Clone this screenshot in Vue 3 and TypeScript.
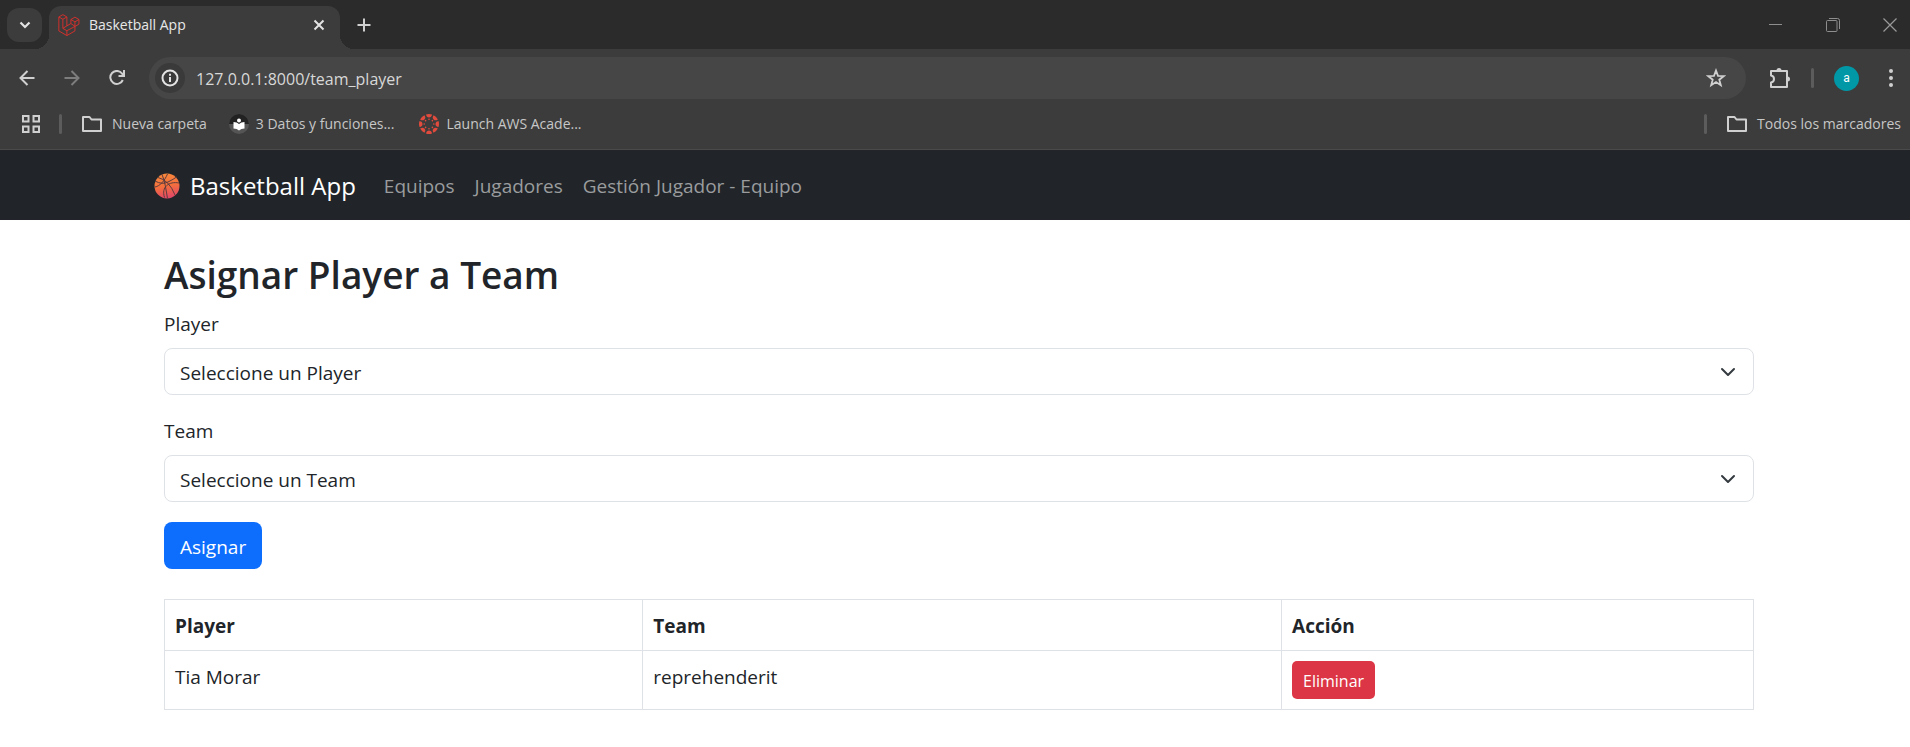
<script setup lang="ts">
import { ref } from 'vue'

interface Assignment {
  id: number
  player: string
  team: string
}

const url = ref('127.0.0.1:8000/team_player')
const player = ref('')
const team = ref('')
const rows = ref<Assignment[]>([{ id: 1, player: 'Tia Morar', team: 'reprehenderit' }])
const links: string[] = ['Equipos', 'Jugadores', 'Gestión Jugador - Equipo']

const petals: number[] = [0, 45, 90, 135, 180, 225, 270, 315]

function assign(): void {
  if (player.value && team.value) {
    rows.value.push({ id: Date.now(), player: player.value, team: team.value })
  }
}

function remove(id: number): void {
  rows.value = rows.value.filter((row) => row.id !== id)
}
</script>

<template>
  <div class="window">
    <header class="chrome">
      <div class="tab-strip">
        <button class="tab-search" aria-label="Buscar pestañas">
          <svg width="12" height="8" viewBox="0 0 12 8"><path d="M1.5 1.5 6 6l4.500-4.500" fill="none" stroke="#e3e3e3" stroke-width="2.200" /></svg>
        </button>
        <div class="tab">
          <svg class="favicon" width="22" height="22" viewBox="0 0 50 52" fill="none" stroke="#d9302c" stroke-width="2.200" stroke-linejoin="round">
            <path d="M1 7 10.500 1.500 20 7v21l9.500-5.500V13l9.500-5.500L48.500 13v11L39 29.500v10.500L20 51 1 40Z" />
            <path d="M1 7l9.500 5.500L20 7M10.500 12.500V34L20 39.500 39 29.500M20 28l-9.500 6M29.500 13 39 18.500l9.500-5.500M39 18.500v11M29.500 22.500 39 29M20 39.500V51" />
          </svg>
          <span class="tab-title">Basketball App</span>
          <button class="icon-button tab-close" aria-label="Cerrar pestaña">
            <svg width="12" height="12" viewBox="0 0 12 12"><path d="m1.500 1.500 9 9m0-9-9 9" stroke="#e3e3e3" stroke-width="2" /></svg>
          </button>
        </div>
        <button class="icon-button new-tab" aria-label="Nueva pestaña">
          <svg width="14" height="14" viewBox="0 0 14 14"><path d="M7 .5v13M.5 7h13" stroke="#d0d0d0" stroke-width="2" /></svg>
        </button>
        <div class="window-controls">
          <button class="icon-button" aria-label="Minimizar">
            <svg width="14" height="14" viewBox="0 0 14 14"><path d="M0 6.500h13" stroke="#8e8e8e" /></svg>
          </button>
          <button class="icon-button" aria-label="Restaurar">
            <svg width="14" height="14" viewBox="0 0 14 14" fill="none" stroke="#8e8e8e"><rect x=".5" y="2.500" width="10.500" height="11" rx="1" /><path d="M3 .5h8.500q2 0 2 2V11" /></svg>
          </button>
          <button class="icon-button" aria-label="Cerrar">
            <svg width="14" height="14" viewBox="0 0 14 14"><path d="m.5.5 13 13m0-13-13 13" stroke="#9a9a9a" stroke-width="1.200" /></svg>
          </button>
        </div>
      </div>

      <div class="toolbar">
        <div class="nav-buttons">
          <button class="icon-button" aria-label="Atrás">
            <svg width="16" height="16" viewBox="0 0 16 16" fill="none" stroke="#d0d0d0" stroke-width="2"><path d="M15.500 8H2M8.500 1 1.500 8l7 7" /></svg>
          </button>
          <button class="icon-button" aria-label="Adelante">
            <svg width="16" height="16" viewBox="0 0 16 16" fill="none" stroke="#7d7d7d" stroke-width="2"><path d="M.5 8H14M7.500 1l7 7-7 7" /></svg>
          </button>
          <button class="icon-button" aria-label="Recargar">
            <svg width="16" height="16" viewBox="0 0 16 16" fill="none" stroke="#d0d0d0" stroke-width="2"><path d="M13.800 10A6.500 6.500 0 1 1 13 3.500L14.800 5.500M15 0v6H9.500" /></svg>
          </button>
        </div>
        <div class="omnibox">
          <button class="site-info" aria-label="Información del sitio">
            <svg width="18" height="18" viewBox="0 0 18 18" fill="none" stroke="#e3e3e3" stroke-width="2"><circle cx="9" cy="9" r="7.500" /><path d="M9 8v5M9 4.800v2" /></svg>
          </button>
          <input v-model="url" class="url" type="text" aria-label="Dirección" />
          <button class="icon-button" aria-label="Añadir a marcadores">
            <svg width="20" height="20" viewBox="0 0 20 20" fill="none" stroke="#d0d0d0" stroke-width="1.800"><path d="m10 2.500 2 5.300 5.700.3-4.400 3.600 1.500 5.500L10 14l-4.800 3.200 1.500-5.500L2.300 8.100l5.700-.3Z" /></svg>
          </button>
        </div>
        <div class="toolbar-end">
          <button class="icon-button" aria-label="Extensiones">
            <svg width="22" height="22" viewBox="0 0 22 22" fill="none" stroke="#d0d0d0" stroke-width="2" stroke-linejoin="round"><path d="M2 4h16v16H2v-4.500q3-.5 3-3.500T2 8.500Z" /><path d="M7.500 3.500a2.500 2.500 0 0 1 5 0ZM18.500 9.500a2.500 2.500 0 0 1 0 5Z" fill="#d0d0d0" stroke="none" /></svg>
          </button>
          <span class="divider"></span>
          <button class="avatar" aria-label="Perfil">a</button>
          <button class="icon-button" aria-label="Menú">
            <svg width="6" height="18" viewBox="0 0 6 18" fill="#d0d0d0"><circle cx="3" cy="2" r="2" /><circle cx="3" cy="9" r="2" /><circle cx="3" cy="16" r="2" /></svg>
          </button>
        </div>
      </div>

      <nav class="bookmarks" aria-label="Marcadores">
        <button class="icon-button apps" aria-label="Aplicaciones">
          <svg width="18" height="18" viewBox="0 0 18 18" fill="none" stroke="#d0d0d0" stroke-width="2"><path d="M1 1h5.500v5.500H1ZM11.500 1H17v5.500h-5.500ZM1 11.500h5.500V17H1ZM11.500 11.500H17V17h-5.500Z" /></svg>
        </button>
        <span class="divider"></span>
        <a class="bookmark folder" href="#">
          <svg width="20" height="16" viewBox="0 0 20 16" fill="none" stroke="#d0d0d0" stroke-width="2" stroke-linejoin="round"><path d="M1 1h6.500l2 2.500H19V15H1Z" /></svg>
          Nueva carpeta
        </a>
        <a class="bookmark" href="#">
          <svg width="20" height="20" viewBox="0 0 20 20"><circle cx="10" cy="10" r="10" fill="#555" /><path d="M0 10a10 10 0 0 1 20 0Z" fill="#222" /><circle cx="10" cy="6.500" r="2" fill="#fff" /><path d="M4.500 8q3.500 0 5.500 2 2-2 5.500-2v6.500q-3.500 0-5.500 2-2-2-5.500-2Z" fill="#fff" /></svg>
          3 Datos y funciones...
        </a>
        <a class="bookmark canvas" href="#">
          <svg width="20" height="20" viewBox="0 0 20 20" fill="#e14b3d">
            <g v-for="angle in petals" :key="angle" :transform="`rotate(${angle} 10 10)`">
              <path d="M7 .5Q10-.5 13 .5 12.500 3.500 10 3.500T7 .5Z" /><circle cx="10" cy="5.200" r=".8" />
            </g>
          </svg>
          Launch AWS Acade...
        </a>
        <span class="divider push"></span>
        <a class="bookmark folder all" href="#">
          <svg width="20" height="16" viewBox="0 0 20 16" fill="none" stroke="#d0d0d0" stroke-width="2" stroke-linejoin="round"><path d="M1 1h6.500l2 2.500H19V15H1Z" /></svg>
          Todos los marcadores
        </a>
      </nav>
    </header>

    <nav class="navbar" aria-label="Principal">
      <a class="brand" href="#">
        <svg width="26" height="26" viewBox="0 0 26 26">
          <defs>
            <linearGradient id="ball" x1="0.300" y1="0" x2="0.500" y2="1">
              <stop offset="0" stop-color="#f98a3c" /><stop offset=".5" stop-color="#f4703c" /><stop offset="1" stop-color="#e04668" />
            </linearGradient>
          </defs>
          <circle cx="13" cy="13" r="12.500" fill="url(#ball)" />
          <path d="M8 1.500C11 8 12 17 13.500 25.500M1 8Q8 12 14 9T22.500 4M4 4.500Q15 7 21 22M10.500 24.500C7 14 15 8 25 10M1 14C6 13 10.500 8 13.500 1" fill="none" stroke="#5b3b3e" stroke-width="1" />
        </svg>
        Basketball App
      </a>
      <a v-for="link in links" :key="link" class="nav-link" href="#">{{ link }}</a>
    </nav>

    <main class="content">
      <h1>Asignar Player a Team</h1>
      <form @submit.prevent="assign">
        <div class="field">
          <label for="player">Player</label>
          <select id="player" v-model="player">
            <option value="">Seleccione un Player</option>
            <option>Tia Morar</option>
          </select>
        </div>
        <div class="field">
          <label for="team">Team</label>
          <select id="team" v-model="team">
            <option value="">Seleccione un Team</option>
            <option>reprehenderit</option>
          </select>
        </div>
        <button class="btn primary" type="submit">Asignar</button>
      </form>

      <table>
        <colgroup><col class="col-player" /><col class="col-team" /><col /></colgroup>
        <thead>
          <tr><th scope="col">Player</th><th scope="col">Team</th><th scope="col">Acción</th></tr>
        </thead>
        <tbody>
          <tr v-for="row in rows" :key="row.id">
            <td>{{ row.player }}</td>
            <td>{{ row.team }}</td>
            <td><button class="btn danger" type="button" @click="remove(row.id)">Eliminar</button></td>
          </tr>
        </tbody>
      </table>
    </main>
  </div>
</template>

<style>
body {
  background: #fff;
}
</style>

<style scoped>
.window,
.window * {
  box-sizing: border-box;
}

.window {
  font-family: "Open Sans", "Noto Sans", sans-serif;
  font-size: 19px;
  line-height: 32px;
  color: #212529;
}

button,
input,
select {
  font: inherit;
  color: inherit;
}

button {
  border: 0;
  padding: 0;
  cursor: pointer;
}

a {
  color: inherit;
  text-decoration: none;
}

svg {
  display: block;
  flex: none;
}

.chrome {
  background: #3c3c3c;
  color: #c7c7c7;
  font-size: 14px;
  line-height: 20px;
  border-bottom: 1px solid #4a4a4a;
}

.icon-button {
  display: grid;
  place-items: center;
  background: none;
}

.tab-strip {
  display: flex;
  align-items: center;
  height: 49px;
  padding-left: 7px;
  background: #2b2b2b;
}

.tab-search {
  display: grid;
  place-items: center;
  width: 35px;
  height: 34px;
  border-radius: 12px;
  background: #3c3c3c;
}

.tab {
  position: relative;
  align-self: flex-end;
  display: flex;
  align-items: center;
  gap: 9px;
  width: 291px;
  height: 43px;
  margin-left: 7px;
  padding: 0 15px 6px 9px;
  border-radius: 12px 12px 0 0;
  background: #3c3c3c;
  color: #e8e8e8;
}

.tab::before,
.tab::after {
  content: "";
  position: absolute;
  bottom: 0;
  width: 14px;
  height: 14px;
}

.tab::before {
  right: 100%;
  background: radial-gradient(circle at 0 0, transparent 14px, #3c3c3c 14px);
}

.tab::after {
  left: 100%;
  background: radial-gradient(circle at 100% 0, transparent 14px, #3c3c3c 14px);
}

.tab-title {
  flex: 1;
}

.new-tab {
  width: 34px;
  height: 34px;
  margin-left: 7px;
}

.window-controls {
  display: flex;
  gap: 43px;
  margin-left: auto;
  padding-right: 13px;
}

.toolbar {
  display: flex;
  align-items: center;
  padding: 8px 16px 8px 19px;
}

.nav-buttons {
  display: flex;
  gap: 29px;
  width: 130px;
}

.omnibox {
  flex: 1;
  display: flex;
  align-items: center;
  height: 42px;
  padding: 0 20px 0 6px;
  border-radius: 21px;
  background: #464646;
}

.site-info {
  display: grid;
  place-items: center;
  width: 30px;
  height: 30px;
  border-radius: 50%;
  background: #3a3a3a;
}

.url {
  flex: 1;
  min-width: 0;
  margin-left: 11px;
  padding: 2px 0 0;
  border: 0;
  outline: 0;
  background: none;
  font-size: 16px;
  color: #d8d8d8;
}

.toolbar-end {
  display: flex;
  align-items: center;
  margin-left: 23px;
}

.divider {
  width: 3px;
  height: 20px;
  border-radius: 2px;
  background: #5c5c5c;
}

.toolbar-end .divider {
  margin: 0 20px;
}

.avatar {
  width: 25px;
  height: 25px;
  margin-right: 29px;
  border-radius: 50%;
  background: #0097a7;
  color: #fff;
  font-family: Roboto, sans-serif;
  font-size: 12px;
}

.bookmarks {
  display: flex;
  align-items: center;
  height: 42px;
  padding: 0 9px 8px 22px;
}

.apps {
  margin-right: 19px;
}

.bookmark {
  display: flex;
  align-items: center;
  gap: 7px;
  margin-left: 22px;
}

.canvas {
  margin-left: 25px;
}

.folder {
  gap: 10px;
  margin-left: 20px;
}

.push {
  margin-left: auto;
}

.navbar {
  display: flex;
  align-items: center;
  gap: 20px;
  min-height: 70px;
  padding: 2px 154px 0;
  background: #212529;
  color: #9a9c9e;
}

.brand {
  display: flex;
  align-items: center;
  gap: 10px;
  margin-right: 8px;
  font-size: 24px;
  color: #fff;
}

.content {
  padding: 30px 156px 36px 164px;
}

h1 {
  margin: 0 0 8px;
  font-size: 37px;
  font-weight: 600;
  line-height: 50px;
}

.field {
  margin-bottom: 20px;
}

label {
  display: block;
  margin-bottom: 8px;
}

select {
  display: block;
  width: 100%;
  height: 47px;
  padding: 2px 45px 0 15px;
  border: 1px solid #dee2e6;
  border-radius: 8px;
  appearance: none;
  background: #fff url("data:image/svg+xml,%3Csvg xmlns='http://www.w3.org/2000/svg' viewBox='0 0 16 16'%3E%3Cpath fill='none' stroke='%23343a40' stroke-linecap='round' stroke-linejoin='round' stroke-width='2' d='m2 5 6 6 6-6'/%3E%3C/svg%3E") no-repeat right 17px center / 16px 16px;
}

.btn {
  display: block;
  color: #fff;
}

.primary {
  height: 47px;
  padding: 2px 16px 0;
  border-radius: 8px;
  background: #0d6efd;
}

.danger {
  height: 38px;
  padding: 2px 11px 0;
  border-radius: 5px;
  background: #dc3545;
  font-size: 16px;
}

table {
  width: 100%;
  margin-top: 30px;
  border-collapse: collapse;
  table-layout: fixed;
}

.col-player {
  width: 30.1%;
}

.col-team {
  width: 40.2%;
}

th,
td {
  padding: 10px;
  border: 1px solid #dee2e6;
  text-align: left;
  vertical-align: top;
}

th {
  padding-bottom: 8px;
  font-weight: 700;
}
</style>
